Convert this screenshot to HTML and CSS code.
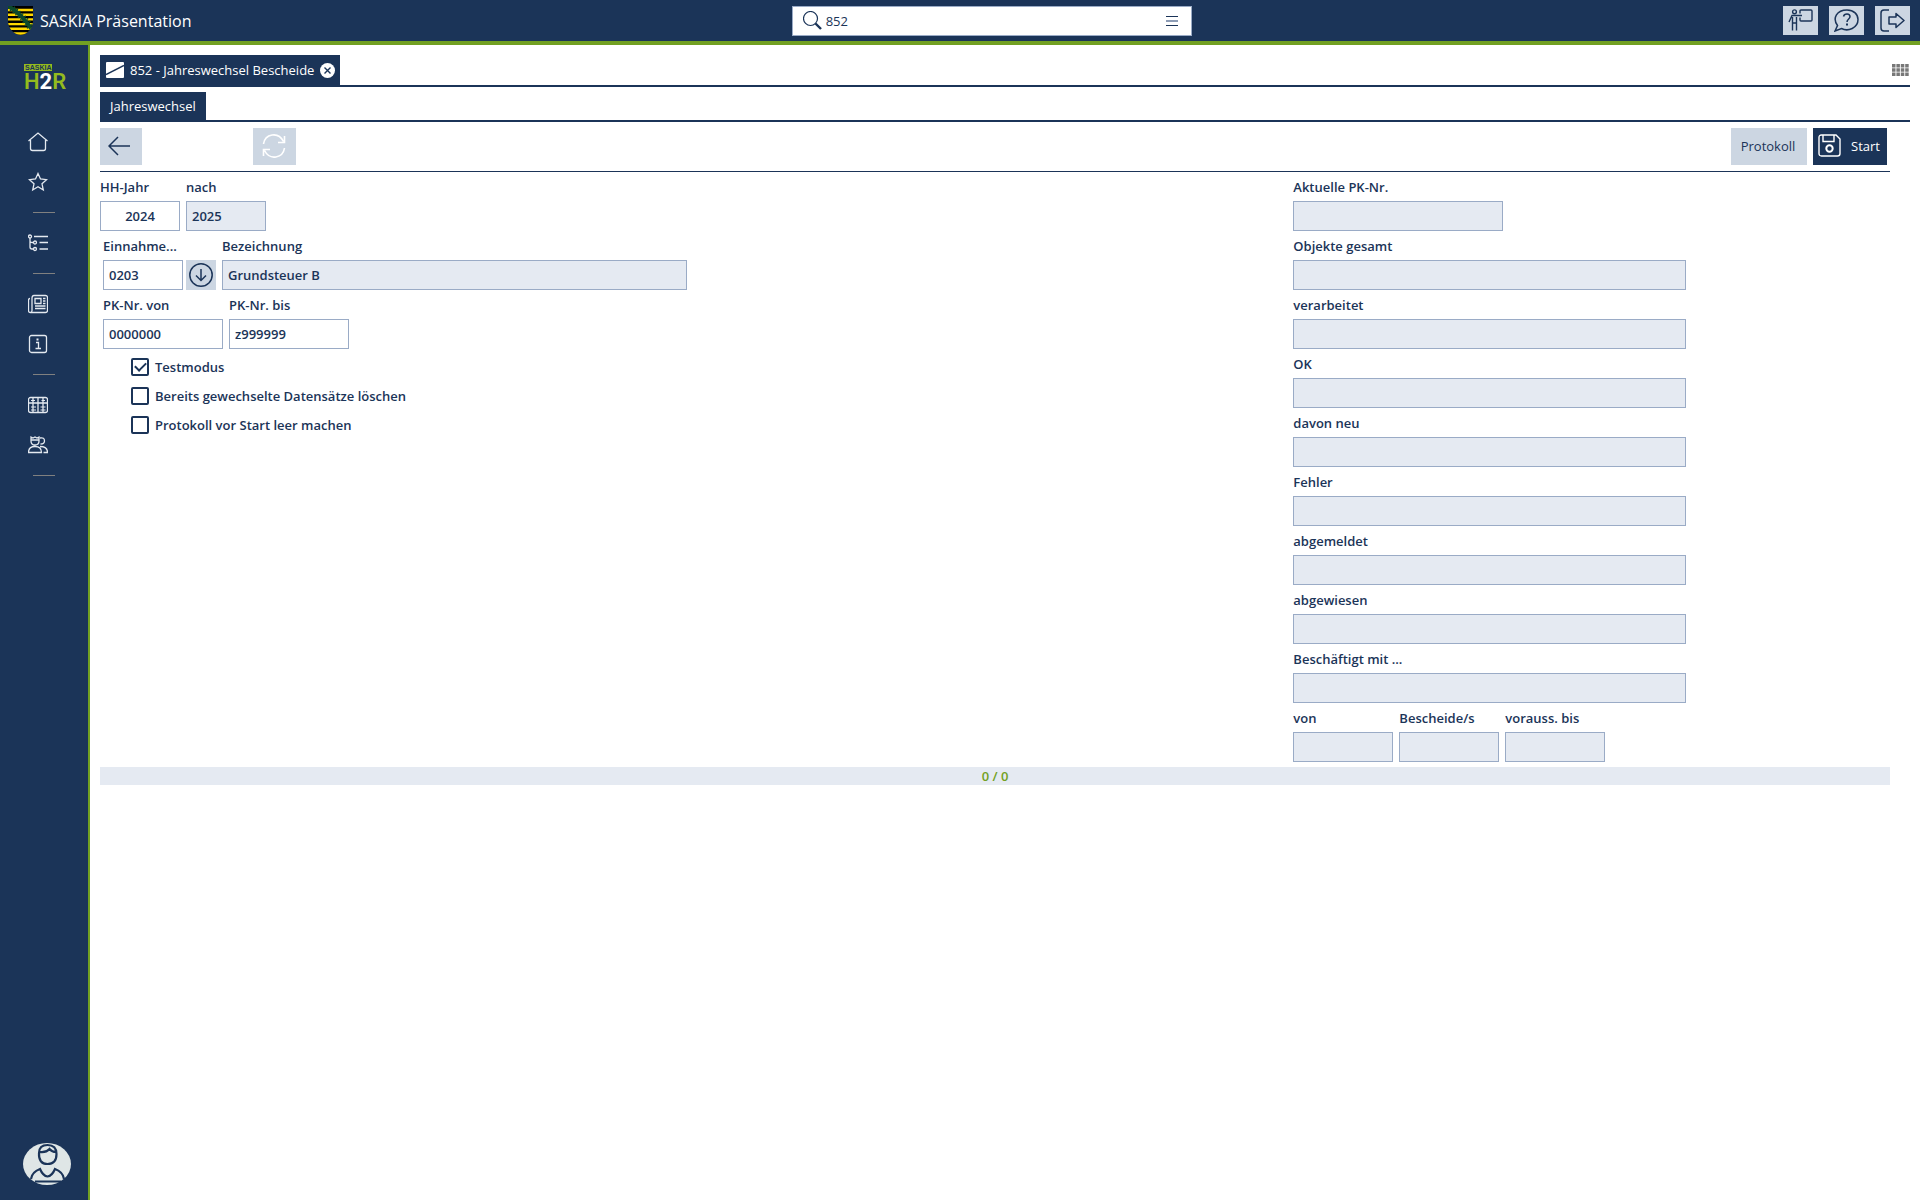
FILE: index.html
```html
<!DOCTYPE html>
<html lang="de">
<head>
<meta charset="utf-8">
<title>SASKIA Präsentation</title>
<link rel="stylesheet" href="styles.css">
</head>
<body>
<header class="topbar">
  <div class="brand">
    <svg class="crest" width="25" height="29" viewBox="0 0 25 29" aria-hidden="true">
      <defs><clipPath id="shield"><path d="M0 0H25V15C25 22 20 28 12.500 29C5 28 0 22 0 15Z"/></clipPath></defs>
      <g clip-path="url(#shield)">
        <path fill="#000" d="M0 0H25V29H0Z"/>
        <path stroke="#ffd800" stroke-width="2.400" d="M0 4H25M0 8.700H25M0 13.400H25M0 18.100H25M0 22.800H25M0 27.500H25"/>
        <path stroke="#0c4a2c" stroke-width="4" fill="none" d="M0 0Q13 7 25 25"/>
        <path stroke="#0c4a2c" stroke-width="1.500" stroke-dasharray="1.500 2" fill="none" d="M3 -1Q16 7 26 21M-1 2Q12 10 23 27"/>
      </g>
    </svg>
    <span class="brand-name">SASKIA Präsentation</span>
  </div>
  <div class="search">
    <svg width="19" height="19" viewBox="0 0 19 19" fill="none" stroke="#1b3458" aria-hidden="true"><circle cx="7.500" cy="7.500" r="7" stroke-width="1.200"/><path stroke-width="2.400" d="M12.500 12.500L18 18"/></svg>
    <input class="search-input" type="text" value="852" aria-label="Suche">
    <button class="search-menu" type="button" aria-label="Menü">
      <svg width="12" height="10" viewBox="0 0 12 10"><path fill="#1b3458" d="M0 0H12V1H0ZM0 9H12V10H0Z"/><path fill="#8d9cb5" d="M0 4H12V6H0Z"/></svg>
    </button>
  </div>
  <div class="top-actions">
    <button class="top-button" type="button" aria-label="Schulung">
      <svg width="25" height="23" viewBox="0 0 25 23" fill="none" stroke="#1b3458" stroke-width="1.400"><circle cx="6.500" cy="2.800" r="1.900"/><path d="M1 13L4 6.500H14M4.500 8V21.500M4.500 14H8.500M8.500 8V21.500"/><path d="M12 4.500V2Q12 1 13 1H23Q24 1 24 2V11Q24 12 23 12H13Q12 12 12 11V8.500"/></svg>
    </button>
    <button class="top-button" type="button" aria-label="Hilfe">
      <svg width="25" height="23" viewBox="0 0 25 23" fill="none" stroke="#1b3458" stroke-width="1.500"><path d="M3.500 16.500C-2 9 3 1 13 1C20 1 24 5.500 24 10.500C24 19 14 23 7.500 19.500L1 22Z"/><path d="M9.500 7.500Q10 5 13 5Q16 5 16 7.800C16 10 13 10 13 13"/><path d="M13 14.500V16.500" stroke-width="2"/></svg>
    </button>
    <button class="top-button" type="button" aria-label="Abmelden">
      <svg width="25" height="23" viewBox="0 0 25 23" fill="none" stroke="#1b3458" stroke-width="1.500"><path d="M9 1H4Q1 1 1 4V19Q1 22 4 22H9"/><path stroke-linejoin="round" d="M9 8H16V4.500L24 11.500L16 18.500V15H9Z"/></svg>
    </button>
  </div>
</header>
<div class="shell">
  <nav class="sidebar" aria-label="Hauptnavigation">
    <div class="product"><span class="product-tag">SASKIA</span><span class="product-name">H<b>2</b>R</span></div>
    <a class="nav-link" href="#" aria-label="Start">
      <svg class="icon" viewBox="0 0 20 20"><path d="M.500 9L10 1L19.500 9M2.500 8V16.500Q2.500 18.500 4.500 18.500H15.500Q17.500 18.500 17.500 16.500V8"/></svg>
    </a>
    <a class="nav-link" href="#" aria-label="Favoriten">
      <svg class="icon" viewBox="0 0 20 20"><path d="M10 1.500L12.500 7L18.500 7.700L14 11.800L15.300 18L10 14.800L4.700 18L6 11.800L1.500 7.700L7.500 7Z"/></svg>
    </a>
    <hr class="nav-rule">
    <a class="nav-link" href="#" aria-label="Struktur">
      <svg class="icon" viewBox="0 0 20 20"><circle cx="2" cy="3.500" r="1.500"/><circle cx="7" cy="9.500" r="1.500"/><circle cx="7" cy="16" r="1.500"/><path d="M2 5V14Q2 16 4 16H5.500M2 8Q2 9.500 4 9.500H5.500M6 3.500H20M11.500 9.500H20M11.500 16H20"/></svg>
    </a>
    <hr class="nav-rule">
    <a class="nav-link" href="#" aria-label="Nachrichten">
      <svg class="icon" viewBox="0 0 20 20"><path d="M4 4Q4 1.500 6 1.500H17.500Q19.500 1.500 19.500 3.500V16.500Q19.500 18.500 17.500 18.500H2.500Q.500 18.500 .500 16.500V6Q.500 4.500 2 4.500M4 4V16.500Q4 18.500 2.500 18.500M7 4.500H13V9.500H7ZM15 4.500H17.500M15 7H17.500M15 9.500H17.500M7 12H17.500M7 14.500H17.500"/></svg>
    </a>
    <a class="nav-link" href="#" aria-label="Information">
      <svg class="icon" viewBox="0 0 20 20"><rect x="1.500" y="1.500" width="17" height="17" rx="2"/><path d="M8 8.500H10.500V14M7.500 14.500H13"/><path stroke-width="2" d="M9.500 4.500V6.500"/></svg>
    </a>
    <hr class="nav-rule">
    <a class="nav-link" href="#" aria-label="Tabelle">
      <svg class="icon" viewBox="0 0 20 20"><rect x=".500" y="2.500" width="19" height="15" rx="2"/><path d="M1 8H19M5 3V17M10 3V17M15 3V17"/><path stroke-width="1" d="M3 5.500H7M3 12H8M3 15H8M13.500 5.500H17M12.500 12H17.500M12.500 15H17.500"/></svg>
    </a>
    <a class="nav-link" href="#" aria-label="Personen">
      <svg class="icon" viewBox="0 0 20 20"><path d="M3 2L5 3L7 2L9 3L11 2V6Q11 10 7 10Q3 10 3 6ZM3 5H11M12 3Q16.500 2 16.500 6Q16.500 9 12.500 9M.500 17.500Q.500 11.500 7 11.500Q13.500 11.500 13.500 17.500ZM12 11.500Q19.500 11.500 19.500 17.500H15.500"/></svg>
    </a>
    <hr class="nav-rule">
    <button class="avatar" type="button" aria-label="Benutzer">
      <svg width="48" height="42" viewBox="0 0 48 42" fill="none" stroke="#1b3458" stroke-width="2.200"><path d="M16 10Q16 2 24.500 2Q33.500 2 33.500 11Q33.500 21 24.500 21Q15.500 21 16 10ZM16.500 9Q23 10 26.500 6Q29 9 33 9M8 36Q9 29 17 26Q20 33 24.500 33.500Q29 33 32 26Q40 29 41 36M12 38.500H38"/></svg>
    </button>
  </nav>
  <main class="content">
    <div class="tab-row">
      <div class="window-tab">
        <svg width="18" height="16" viewBox="0 0 18 16" aria-hidden="true"><rect width="18" height="16" rx="1" fill="#fff"/><path d="M0 12.500L18 3.500" stroke="#1b3458" stroke-width="1.500"/></svg>
        <span>852 - Jahreswechsel Bescheide</span>
        <button class="tab-close" type="button" aria-label="Schließen"><svg width="15" height="15" viewBox="0 0 15 15"><circle cx="7.500" cy="7.500" r="7.500" fill="#fff"/><path d="M4.500 4.500L10.500 10.500M10.500 4.500L4.500 10.500" stroke="#1b3458" stroke-width="1.400"/></svg></button>
      </div>
      <button class="grid-button" type="button" aria-label="Fenster anordnen">
        <svg width="17" height="12" viewBox="0 0 17 12"><path stroke="#777" stroke-width="3.400" stroke-dasharray="3.500 .900" d="M0 1.700H17M0 6H17M0 10.300H17"/></svg>
      </button>
    </div>
    <div class="tab-row section-row"><button class="section-tab" type="button">Jahreswechsel</button></div>
    <div class="panel">
      <div class="toolbar">
        <button class="tool back" type="button" aria-label="Zurück"><svg width="22" height="20" viewBox="0 0 22 20" fill="none" stroke="#1b3458" stroke-width="1.500"><path d="M22 10H1M10 1L1 10L10 19"/></svg></button>
        <button class="tool" type="button" aria-label="Aktualisieren" disabled><svg width="24" height="24" viewBox="0 0 24 24" fill="none" stroke="#fff" stroke-width="1.600"><path d="M1.500 10C3 0 16-3 21.500 7.500M22.500 2V8.500H16M22.500 14C21 24 8 27 2.500 16.500M1.500 22V15.500H8"/></svg></button>
        <button class="tool protocol" type="button">Protokoll</button>
        <button class="tool start" type="button"><svg width="23" height="23" viewBox="0 0 23 23" fill="none" stroke="#fff" stroke-width="1.400"><path d="M3.500 1H18L22 5V19.500Q22 22 19.500 22H3.500Q1 22 1 19.500V3.500Q1 1 3.500 1ZM5 1V7.500H16V1"/><circle cx="11.500" cy="14.500" r="3.200" stroke-width="2"/></svg>Start</button>
      </div>
      <form class="form">
        <div class="inputs">
          <div class="row">
            <div class="field w80"><label for="jahr">HH-Jahr</label><input class="centered" id="jahr" type="text" value="2024"></div>
            <div class="field w80"><label for="nach">nach</label><input id="nach" type="text" value="2025" readonly></div>
          </div>
          <div class="row inset lookup">
            <div class="field w80"><label for="einnahme">Einnahme...</label><input id="einnahme" type="text" value="0203"></div>
            <button class="pick" type="button" aria-label="Auswählen"><svg width="24" height="24" viewBox="0 0 24 24" fill="none" stroke="#1b3458" stroke-width="1.500"><circle cx="12" cy="12" r="11.200"/><path d="M12 6V17.500M7 12.500L12 17.500L17 12.500"/></svg></button>
            <div class="field wide"><label for="bez">Bezeichnung</label><input id="bez" type="text" value="Grundsteuer B" readonly></div>
          </div>
          <div class="row inset">
            <div class="field w120"><label for="pkvon">PK-Nr. von</label><input id="pkvon" type="text" value="0000000"></div>
            <div class="field w120"><label for="pkbis">PK-Nr. bis</label><input id="pkbis" type="text" value="z999999"></div>
          </div>
          <div class="checks">
            <label class="check"><input type="checkbox" checked>Testmodus</label>
            <label class="check"><input type="checkbox">Bereits gewechselte Datensätze löschen</label>
            <label class="check"><input type="checkbox">Protokoll vor Start leer machen</label>
          </div>
        </div>
        <div class="results">
          <div class="field w210"><label for="r1">Aktuelle PK-Nr.</label><input id="r1" type="text" readonly></div>
          <div class="field"><label for="r2">Objekte gesamt</label><input id="r2" type="text" readonly></div>
          <div class="field"><label for="r3">verarbeitet</label><input id="r3" type="text" readonly></div>
          <div class="field"><label for="r4">OK</label><input id="r4" type="text" readonly></div>
          <div class="field"><label for="r5">davon neu</label><input id="r5" type="text" readonly></div>
          <div class="field"><label for="r6">Fehler</label><input id="r6" type="text" readonly></div>
          <div class="field"><label for="r7">abgemeldet</label><input id="r7" type="text" readonly></div>
          <div class="field"><label for="r8">abgewiesen</label><input id="r8" type="text" readonly></div>
          <div class="field"><label for="r9">Beschäftigt mit ...</label><input id="r9" type="text" readonly></div>
          <div class="row">
            <div class="field w100"><label for="r10">von</label><input id="r10" type="text" readonly></div>
            <div class="field w100"><label for="r11">Bescheide/s</label><input id="r11" type="text" readonly></div>
            <div class="field w100"><label for="r12">vorauss. bis</label><input id="r12" type="text" readonly></div>
          </div>
        </div>
      </form>
      <div class="progress">0 / 0</div>
    </div>
  </main>
</div>
</body>
</html>
```
FILE: styles.css
```css
:root {
  --navy: #1b3458;
  --green: #72a022;
  --soft: #ccd6e2;
  --field: #e5eaf2;
  --line: #9aabc6;
}
* { box-sizing: border-box; }
body {
  margin: 0;
  min-height: 100vh;
  display: flex;
  flex-direction: column;
  font: 600 13px/18px "Open Sans", sans-serif;
  color: var(--navy);
  background: #fff;
}
svg { display: block; flex: none; }
button {
  display: flex;
  align-items: center;
  justify-content: center;
  margin: 0;
  padding: 0;
  border: 0;
  font: inherit;
  color: inherit;
  background: none;
}
input { font: inherit; color: inherit; }

.topbar {
  display: grid;
  grid-template-columns: 12fr 400px 11fr;
  align-items: center;
  height: 45px;
  padding: 0 10px 0 8px;
  border-bottom: 4px solid var(--green);
  background: var(--navy);
}
.brand { display: flex; align-items: center; gap: 7px; }
.brand-name { font-size: 16px; line-height: 24px; font-weight: 400; color: #fff; }
.search {
  display: flex;
  align-items: center;
  height: 30px;
  padding: 0 13px 0 10px;
  border: 1px solid var(--line);
  background: #fff;
}
.search-input { flex: 1; min-width: 0; padding: 0 4px; border: 0; outline: 0; font-weight: 500; background: none; }
.top-actions { display: flex; justify-content: flex-end; gap: 11px; }
.top-button { width: 35px; height: 29px; background: var(--soft); }

.shell { flex: 1; display: flex; }
.sidebar {
  flex: none;
  width: 90px;
  display: flex;
  flex-direction: column;
  align-items: flex-start;
  padding: 19px 0 15px 23px;
  border-right: 2px solid var(--green);
  background: var(--navy);
}
.product { display: flex; flex-direction: column; align-items: flex-start; height: 58px; padding-left: 1px; }
.product-tag { padding: 0 1px; font: 700 7px/7px "Liberation Sans", sans-serif; color: var(--navy); background: #94bb1e; }
.product-name { font: 600 22px/22px Roboto, sans-serif; color: #94bb1e; }
.product-name b { font-weight: 700; color: #fff; }
.nav-link { display: flex; align-items: center; justify-content: center; width: 30px; height: 40px; }
.icon { width: 20px; height: 20px; fill: none; stroke: #e4e9f0; stroke-width: 1.3px; }
.nav-rule { flex: none; width: 22px; height: 1px; margin: 10px 0 10px 10px; border: 0; background: #808080; }
.avatar { width: 48px; height: 42px; margin-top: auto; border-radius: 50%; background: #dfe6e6; }

.content { flex: 1; min-width: 0; padding: 10px 10px 0; }
.tab-row { display: flex; justify-content: space-between; align-items: center; height: 32px; border-bottom: 2px solid var(--navy); }
.section-row { height: 30px; margin-top: 5px; }
.window-tab {
  display: flex;
  align-items: center;
  gap: 6px;
  height: 30px;
  padding: 0 5px 0 6px;
  font-weight: 400;
  color: #fff;
  background: var(--navy);
}
.grid-button { padding-right: 1px; }
.section-tab { height: 28px; padding: 0 10px; font-weight: 400; color: #fff; background: var(--navy); }

.panel { padding-right: 20px; }
.toolbar {
  display: flex;
  gap: 6px;
  height: 50px;
  padding: 6px 3px 0 0;
  border-bottom: 1px solid var(--navy);
}
.tool { width: 43px; height: 37px; padding: 0 2px 2px 0; background: var(--soft); }
.back { width: 42px; margin-right: 105px; padding-right: 4px; }
.protocol { width: 76px; margin-left: auto; font-weight: 400; }
.start { width: 74px; gap: 10px; color: #fff; font-weight: 500; background: var(--navy); }

.form { display: grid; grid-template-columns: 2fr 1fr; }
.inputs, .results { display: flex; flex-direction: column; align-items: flex-start; min-width: 0; }
.row { display: flex; align-items: flex-end; gap: 6px; }
.inset { padding-left: 3px; }
.field { display: flex; flex-direction: column; width: 393px; }
.field label { padding-top: 2px; line-height: 27px; white-space: nowrap; }
.field input {
  width: 100%;
  height: 30px;
  padding: 0 5px;
  border: 1px solid var(--line);
  border-radius: 0;
  background: #fff;
}
.field input:read-only { background: var(--field); }
.field .centered { text-align: center; }
.w80 { width: 80px; }
.w100 { width: 100px; }
.w120 { width: 120px; }
.w210 { width: 210px; }
.wide { width: 465px; }
.pick { width: 30px; height: 30px; background: var(--soft); }
.lookup .w80 { margin-right: -3px; }
.checks { padding: 3px 0 0 31px; }
.check { display: flex; align-items: center; gap: 6px; height: 29px; }
.check input {
  appearance: none;
  display: grid;
  place-content: center;
  width: 18px;
  height: 18px;
  margin: 0;
  border: 2px solid var(--navy);
  border-radius: 2px;
}
.check input:checked::before {
  content: "";
  width: 9px;
  height: 5px;
  margin-bottom: 3px;
  border: solid var(--navy);
  border-width: 0 0 2px 2px;
  transform: rotate(-45deg);
}
.progress { margin-top: 5px; text-align: center; color: var(--green); background: var(--field); }
```
